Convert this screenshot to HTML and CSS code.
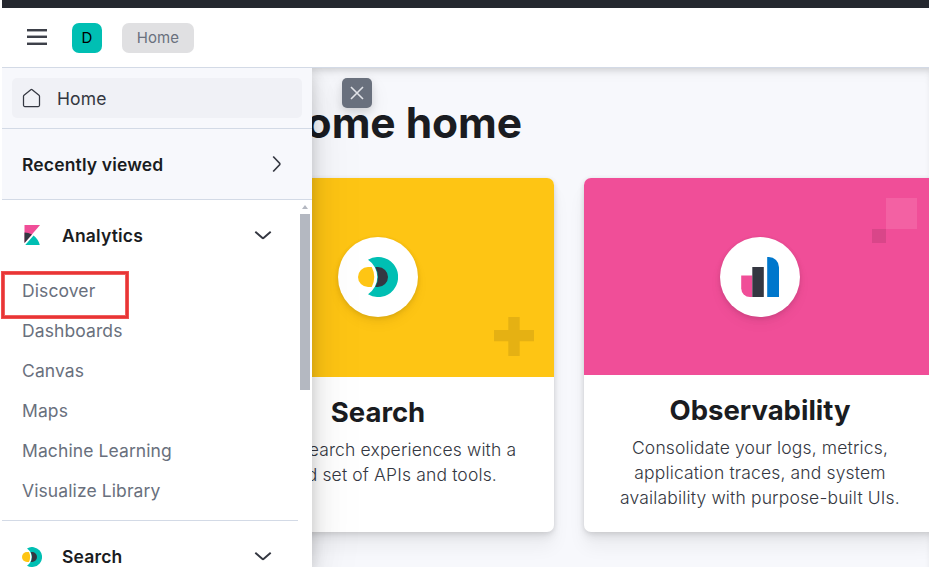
FILE: index.html
```html
<!DOCTYPE html>
<html lang="en">
<head>
<meta charset="utf-8">
<title>Home</title>
<link rel="stylesheet" href="styles.css">
</head>
<body>
<div class="app">
  <div class="topstrip"></div>
  <header class="header">
    <svg class="burger" width="20" height="16" viewBox="0 0 20 16"><path d="M0 0h20v1H0zM0 7h20v2H0zM0 14h20v1H0z" fill="#3d4049"/><path d="M0 1h20v1H0zM0 15h20v1H0z" fill="#3d4049"/><path d="M0 2h20v1H0zM0 6h20v1H0zM0 13h20v1H0z" fill="#a9abb0"/></svg>
    <span class="space">D</span>
    <span class="crumb">Home</span>
  </header>
  <div class="body">
    <main class="page">
      <h1 class="title">Welcome home</h1>
      <div class="cards">
        <article class="card">
          <div class="banner banner-search">
            <div class="disc">
              <svg width="40" height="40" viewBox="0 0 32 32"><use href="#logo-search"/></svg>
            </div>
            <svg class="deco-plus" width="40" height="39" viewBox="0 0 40 39"><path d="M14.3 0h11.4v13H40v11.3H25.700V39H14.300V24.300H0V13h14.300z" fill="#e5b113"/></svg>
          </div>
          <h2 class="card-title">Search</h2>
          <p class="card-text">Create search experiences with a refined set of APIs and tools.</p>
        </article>
        <article class="card">
          <div class="banner banner-obs">
            <div class="disc">
              <svg width="40" height="40" viewBox="0 0 40 40">
                <path d="M1.200 18.500H12.300V40H10a8.800 8.800 0 0 1-8.800-8.800z" fill="#f04e98"/>
                <path d="M12.300 10h11.500v30H12.300z" fill="#343741"/>
                <path d="M27.200 0h1.600A10.200 10.200 0 0 1 39 10.200V40H27.200z" fill="#0077cc"/>
              </svg>
            </div>
            <svg class="deco-squares" width="45" height="45" viewBox="0 0 45 45"><path d="M14 0h31v31H14z" fill="#f361a3"/><path d="M0 31h14v14H0z" fill="#d94689"/></svg>
          </div>
          <h2 class="card-title">Observability</h2>
          <p class="card-text">Consolidate your logs, metrics, application traces, and system availability with purpose-built UIs.</p>
        </article>
      </div>
    </main>

    <nav class="drawer">
      <div class="drawer-home">
        <a class="home-link">
          <svg width="20" height="20" viewBox="0 0 20 20"><path d="M1.500 8.300Q1.500 7.600 2 7.200L8.800 1.700Q9.500 1.200 10.200 1.700L17 7.200Q17.500 7.600 17.500 8.300V17.300Q17.500 18.500 16.300 18.500H2.700Q1.500 18.500 1.500 17.300z" fill="none" stroke="#343741" stroke-width="1.250"/></svg>
          <span>Home</span>
        </a>
      </div>
      <div class="recent">
        <span>Recently viewed</span>
        <svg width="20" height="20" viewBox="0 0 20 20"><path d="M6.200 2.500L12.600 9.200Q13.200 10 12.600 10.800L6.200 17.500" fill="none" stroke="#343741" stroke-width="1.700"/></svg>
      </div>
      <div class="scroller">
        <div class="sections">
          <section class="section">
            <div class="section-head">
              <svg class="kibana" width="20" height="20" viewBox="0 0 32 32"><path d="M4 0v28.800L28.900 0z" fill="#f04e98"/><path d="M4 12v16.800l11.900-13.700A24.700 24.700 0 0 0 4 12" fill="#343741"/><path d="M18.500 16.700L5.200 32h23.200c-1.300-6.300-4.900-11.700-9.900-15.300" fill="#00bfb3"/></svg>
              <span>Analytics</span>
              <svg class="chev" width="20" height="20" viewBox="0 0 20 20"><path d="M2.300 5.700L9.200 11.800Q10 12.500 10.800 11.800L17.700 5.700" fill="none" stroke="#343741" stroke-width="1.900"/></svg>
            </div>
            <ul class="links">
              <li>Discover</li>
              <li>Dashboards</li>
              <li>Canvas</li>
              <li>Maps</li>
              <li>Machine Learning</li>
              <li>Visualize Library</li>
            </ul>
          </section>
          <section class="section">
            <div class="section-head">
              <svg width="20" height="20" viewBox="0 0 32 32">
                <g id="logo-search">
                  <path d="M8 2.200A16 16 0 1 1 8 29.800A16.500 16.500 0 0 0 8 2.200" fill="#00bfb3"/>
                  <path d="M13.800 8H16a8 8 0 0 1 0 16h-2.200a16.500 16.500 0 0 0 0-16" fill="#343741"/>
                  <path d="M11 8H8a8 8 0 0 0 0 16h3a18 18 0 0 0 0-16" fill="#fec514"/>
                </g>
              </svg>
              <span>Search</span>
              <svg class="chev" width="20" height="20" viewBox="0 0 20 20"><path d="M2.300 5.700L9.200 11.800Q10 12.500 10.800 11.800L17.700 5.700" fill="none" stroke="#343741" stroke-width="1.900"/></svg>
            </div>
          </section>
        </div>
        <div class="scrollbar">
          <svg width="6" height="4" viewBox="0 0 6 4"><path d="M3 0L6 4H0z" fill="#b4b8c1"/></svg>
          <div class="thumb"></div>
        </div>
      </div>
    </nav>
    <button class="close" aria-label="Close"><svg width="16" height="16" viewBox="0 0 16 16"><path d="M2 2l12 12M14 2L2 14" stroke="#e1e3e8" stroke-width="1.600"/></svg></button>
  </div>
  <div class="marker"></div>
</div>
</body>
</html>
```
FILE: styles.css
```css
* { box-sizing: border-box; }
body {
  margin: 0;
  background: #fff;
  font-family: Inter, "Liberation Sans", sans-serif;
  font-size: 17.5px;
  color: #343741;
}
.app {
  position: relative;
  height: 567px;
  padding-left: 2px;
  display: flex;
  flex-direction: column;
  overflow: hidden;
}
.topstrip { height: 8px; flex: none; background: #25282f; }
.header {
  position: relative;
  z-index: 3;
  flex: none;
  height: 60px;
  display: flex;
  align-items: center;
  padding-left: 25px;
  background: #fff;
  border-bottom: 1px solid #d3dae6;
}
.burger { margin: -1px 25px 0 0; }
.space {
  width: 30px;
  height: 30px;
  margin-right: 20px;
  border-radius: 7px;
  background: #00bfb3;
  color: #000;
  font-size: 15px;
  line-height: 30px;
  text-align: center;
}
.crumb {
  width: 72px;
  height: 30px;
  border-radius: 7px;
  background: #e0e0e2;
  color: #69707d;
  font-size: 15px;
  line-height: 30px;
  text-align: center;
  letter-spacing: .1px;
}
.body {
  position: relative;
  flex: 1;
  min-height: 0;
  overflow: hidden;
  background: #f7f8fc;
  box-shadow: inset 0 5px 7px -3px rgba(0, 0, 0, .15), inset 0 14px 14px -8px rgba(0, 0, 0, .03);
}
.page { padding: 30px 0 0 200px; }
.title {
  margin: 0;
  font-size: 42.5px;
  font-weight: 700;
  line-height: 50px;
  letter-spacing: -.05px;
  color: #1a1c21;
  white-space: nowrap;
}
.cards { display: flex; gap: 30px; margin-top: 30px; }
.card {
  flex: none;
  width: 352px;
  height: 354px;
  border-radius: 7px;
  background: #fff;
  text-align: center;
  box-shadow: 0 1px 5px rgba(0, 0, 0, .1), 0 4.500px 9px rgba(0, 0, 0, .07), 0 15px 18px rgba(0, 0, 0, .05);
}
.banner {
  position: relative;
  padding-top: 59px;
  display: flex;
  justify-content: center;
  border-radius: 7px 7px 0 0;
}
.banner-search { height: 199px; background: #fec514; }
.banner-obs { height: 197px; background: #f04e98; }
.disc {
  width: 80px;
  height: 80px;
  display: grid;
  place-items: center;
  border-radius: 50%;
  background: #fff;
  box-shadow: 0 1px 4px rgba(0, 0, 0, .08), 0 3px 7px rgba(0, 0, 0, .06), 0 7px 14px rgba(0, 0, 0, .04);
}
.deco-plus { position: absolute; right: 20px; bottom: 21px; }
.deco-squares { position: absolute; right: 19px; top: 20px; }
.card-title {
  margin: 20px 0 10px;
  font-size: 27.5px;
  line-height: 30px;
  font-weight: 700;
  color: #1a1c21;
}
.card-text { margin: 0 20px; line-height: 25px; font-weight: 300; letter-spacing: .15px; }
.drawer {
  position: absolute;
  inset: 0 auto 0 0;
  width: 310px;
  display: flex;
  flex-direction: column;
  background: #fff;
  letter-spacing: .1px;
  box-shadow: 0 3px 13px rgba(0, 0, 0, .14), 0 10px 30px rgba(0, 0, 0, .1), 0 20px 60px rgba(0, 0, 0, .06);
}
.drawer-home {
  flex: none;
  height: 61px;
  padding: 10px;
  background: #f7f8fc;
  border-bottom: 1px solid #d3dae6;
}
.home-link {
  display: flex;
  align-items: center;
  gap: 15px;
  height: 40px;
  padding-left: 10px;
  border-radius: 5px;
  background: #f0f1f6;
}
.recent {
  flex: none;
  height: 71px;
  display: flex;
  align-items: center;
  justify-content: space-between;
  padding: 0 25px 0 20px;
  background: #f7f8fc;
  border-bottom: 1px solid #d3dae6;
  color: #1a1c21;
  font-weight: 600;
  letter-spacing: .15px;
}
.scroller { flex: 1; min-height: 0; display: flex; overflow: hidden; }
.sections { width: 296px; flex: none; }
.section { height: 321px; border-bottom: 1px solid #d3dae6; }
.section-head {
  height: 71px;
  display: flex;
  align-items: center;
  padding: 0 25px 0 20px;
  color: #1a1c21;
  font-weight: 600;
  letter-spacing: .18px;
}
.section-head span { margin-left: 20px; }
.kibana { margin-top: -1px; }
.section-head .chev { margin-left: auto; }
.links { margin: 0; padding: 0 0 0 20px; list-style: none; color: #69707d; line-height: 40px; }
.scrollbar {
  width: 14px;
  display: flex;
  flex-direction: column;
  align-items: center;
  padding: 5px 2px 0;
}
.thumb { width: 10px; height: 176px; margin-top: 5px; background: #b4b8c1; }
.close {
  position: absolute;
  left: 340px;
  top: 10px;
  width: 30px;
  height: 30px;
  display: grid;
  place-items: center;
  padding: 0;
  border: 0;
  border-radius: 5px;
  background: #69707d;
  box-shadow: 0 3px 8px rgba(0, 0, 0, .12), 0 8px 20px rgba(0, 0, 0, .08);
}
.marker {
  position: absolute;
  left: 2px;
  top: 272px;
  width: 126px;
  height: 46px;
  border: 2px solid #e83536;
  box-shadow: 0 0 0 1px #f0504f, inset 0 0 0 1px #f0605f;
}
```
